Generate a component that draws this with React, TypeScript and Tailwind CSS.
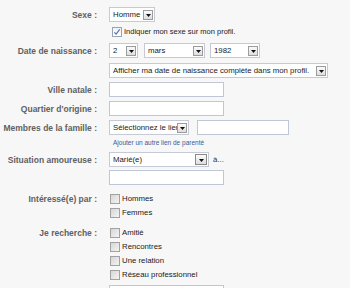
import React from "react";

const FONT = "font-['Liberation_Sans',Arial,sans-serif]";

function Arrow({ big = false }: { big?: boolean }) {
  return (
    <span
      className={
        "shrink-0 flex items-end justify-center pb-[2px] border bg-gradient-to-b from-[#fbfbfb] to-[#dedede] " +
        (big ? "w-[12px] h-[11px] border-[#8a8a8a]" : "w-[10px] h-[10px] border-[#9c9c9c]")
      }
    >
      <svg width="5" height="3" viewBox="0 0 5 3">
        <path d="M0 0H5L2.5 3Z" fill="#111" />
      </svg>
    </span>
  );
}

function Select({ w, text, big = false }: { w: string; text: string; big?: boolean }) {
  return (
    <div className={"flex items-center h-[15px] border border-[#c5cad5] bg-white pl-[3px] pr-[1px] " + w}>
      <span className="flex-1 overflow-hidden whitespace-nowrap text-[7.8px] leading-[13px] text-[#1a1a1a]">{text}</span>
      <Arrow big={big} />
    </div>
  );
}

function Input({ w }: { w: string }) {
  return <div className={"h-[15px] border border-[#bfc7d6] bg-white " + w} />;
}

function Box({ checked = false }: { checked?: boolean }) {
  return (
    <span
      className={
        "shrink-0 w-[10px] h-[10px] border flex items-center justify-center " +
        (checked
          ? "border-[#9aa3b3] bg-gradient-to-b from-[#eef1f6] to-[#ffffff]"
          : "border-[#a2a2a2] bg-gradient-to-br from-[#d6d6d6] to-[#f4f4f4]")
      }
    >
      {checked && (
        <svg width="8" height="8" viewBox="0 0 8 8">
          <path d="M1.4 4.3L3.1 6.1L6.7 1.3" stroke="#5670a8" strokeWidth="1.1" fill="none" />
        </svg>
      )}
    </span>
  );
}

function Label({ children }: { children?: React.ReactNode }) {
  return (
    <div className="w-[97px] shrink-0 text-right font-bold text-[8.5px] leading-[12px] text-[#616161] whitespace-nowrap">
      {children}
    </div>
  );
}

function Row({
  label,
  className = "",
  children,
}: {
  label?: string;
  className?: string;
  children?: React.ReactNode;
}) {
  return (
    <div className={"flex items-center " + className}>
      <Label>{label}</Label>
      <div className="ml-[12px] flex items-center">{children}</div>
    </div>
  );
}

function Check({ text, className = "" }: { text: string; className?: string }) {
  return (
    <div className={"flex items-center h-[14px] ml-[1px] " + className}>
      <Box />
      <span className="ml-[2px] text-[7.8px] text-[#1a1a1a] whitespace-nowrap">{text}</span>
    </div>
  );
}

export default function App() {
  return (
    <div className={"w-[350px] h-[288px] overflow-hidden bg-[#f7f7f7] pt-[7px] " + FONT}>
      <Row label="Sexe :">
        <Select w="w-[46px]" text="Homme" />
      </Row>
      <Row className="mt-[4px] h-[11px]">
        <div className="flex items-center ml-[3px]">
          <Box checked />
          <span className="ml-[2px] text-[7.5px] text-[#1a1a1a] whitespace-nowrap">
            Indiquer mon sexe sur mon profil.
          </span>
        </div>
      </Row>
      <Row label="Date de naissance :" className="mt-[6px]">
        <Select w="w-[29px]" text="2" />
        <div className="ml-[6px]">
          <Select w="w-[61px]" text="mars" />
        </div>
        <div className="ml-[5px]">
          <Select w="w-[50px]" text="1982" />
        </div>
      </Row>
      <Row className="mt-[5px]">
        <Select w="w-[219px]" text="Afficher ma date de naissance complète dans mon profil." />
      </Row>
      <Row label="Ville natale :" className="mt-[4px]">
        <Input w="w-[115px]" />
      </Row>
      <Row label="Quartier d'origine :" className="mt-[4px]">
        <Input w="w-[115px]" />
      </Row>
      <Row label="Membres de la famille :" className="mt-[4px]">
        <Select w="w-[80px]" text="Sélectionnez le lien" />
        <div className="ml-[8px]">
          <Input w="w-[92px]" />
        </div>
      </Row>
      <Row className="mt-[3px] h-[10px]">
        <span className="ml-[4px] text-[6.5px] text-[#3b5998] whitespace-nowrap">
          Ajouter un autre lien de parenté
        </span>
      </Row>
      <Row label="Situation amoureuse :" className="mt-[4px]">
        <Select w="w-[100px]" text="Marié(e)" big />
        <span className="ml-[4px] text-[7.8px] text-[#333]">à...</span>
      </Row>
      <Row className="mt-[3px]">
        <Input w="w-[115px]" />
      </Row>
      <div className="flex items-start mt-[7px]">
        <div className="pt-[1px]">
          <Label>Intéressé(e) par :</Label>
        </div>
        <div className="ml-[12px] flex flex-col">
          <Check text="Hommes" />
          <Check text="Femmes" />
        </div>
      </div>
      <div className="flex items-start mt-[6px]">
        <div className="pt-[1px]">
          <Label>Je recherche :</Label>
        </div>
        <div className="ml-[12px] flex flex-col">
          <Check text="Amitié" />
          <Check text="Rencontres" />
          <Check text="Une relation" />
          <Check text="Réseau professionnel" />
        </div>
      </div>
      <Row className="mt-[3px]">
        <Input w="w-[115px]" />
      </Row>
    </div>
  );
}
